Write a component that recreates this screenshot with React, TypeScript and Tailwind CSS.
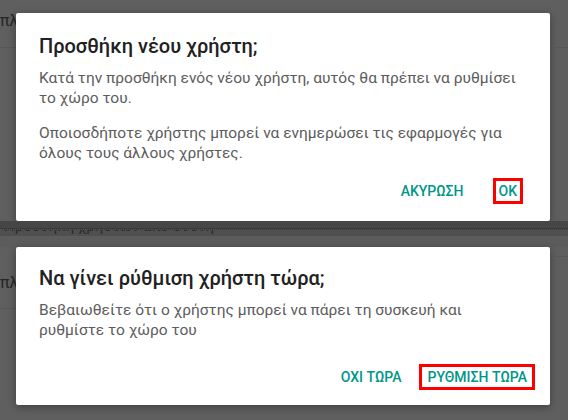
import React from "react";

const Dialog1: React.FC = () => (
  <div className="w-[534px] shrink-0 mt-[13px] bg-white rounded-[2px] shadow-[0_2px_8px_rgba(0,0,0,0.35)] pt-[19px] pl-[23px]">
    <h2 className="text-[20px] leading-[28px] font-medium text-[#212121]">
      Προσθήκη νέου χρήστη;
    </h2>
    <div className="mt-[8px] text-[15.5px] leading-[20px] text-[#5c5c5c] whitespace-nowrap">
      <p>
        Κατά την προσθήκη ενός νέου χρήστη, αυτός θα πρέπει να ρυθμίσει
        <br />
        το χώρο του.
      </p>
      <p className="mt-[15px]">
        Οποιοσδήποτε χρήστης μπορεί να ενημερώσει τις εφαρμογές για
        <br />
        όλους τους άλλους χρήστες.
      </p>
    </div>
    <div className="mt-[10px] pb-[12px] pr-[27px] flex justify-end items-center gap-[21px]">
      <button className="h-9 px-2 text-[14px] font-medium text-[#009688]">
        ΑΚΥΡΩΣΗ
      </button>
      <button className="h-9 flex items-center text-[14px] font-medium text-[#009688]">
        <span className="border-[3px] border-[#ff0000] px-[3px] leading-[20px]">
          OK
        </span>
      </button>
    </div>
  </div>
);

const Dialog2: React.FC = () => (
  <div className="w-[534px] shrink-0 bg-white rounded-[2px] shadow-[0_2px_8px_rgba(0,0,0,0.35)] pt-[17px] pl-[23px]">
    <h2 className="text-[20px] leading-[28px] font-medium text-[#212121]">
      Να γίνει ρύθμιση χρήστη τώρα;
    </h2>
    <div className="mt-[8px] text-[15.5px] leading-[20px] text-[#5c5c5c] whitespace-nowrap">
      <p>
        Βεβαιωθείτε ότι ο χρήστης μπορεί να πάρει τη συσκευή και
        <br />
        ρυθμίστε το χώρο του
      </p>
    </div>
    <div className="mt-[19px] pb-[10px] pr-[15px] flex justify-end items-center gap-[10px]">
      <button className="h-9 px-2 text-[14px] font-medium text-[#009688]">
        ΟΧΙ ΤΩΡΑ
      </button>
      <button className="h-9 flex items-center text-[14px] font-medium text-[#009688]">
        <span className="border-[3px] border-[#ff0000] px-[5px] leading-[20px]">
          ΡΥΘΜΙΣΗ ΤΩΡΑ
        </span>
      </button>
    </div>
  </div>
);

export default function App() {
  return (
    <div className="w-[568px] h-[420px] overflow-hidden bg-[#5f5f5f] flex flex-col font-['Roboto',sans-serif]">
      {/* first row */}
      <div className="flex items-start">
        <div className="w-[16px] shrink-0 overflow-hidden">
          <div className="h-[48px] border-b border-[#575757] pt-[11px] text-[16px] leading-[20px] text-[#262626] whitespace-nowrap">
            πλ
          </div>
        </div>
        <Dialog1 />
        <div className="flex-1">
          <div className="h-[48px] border-b border-[#575757]" />
        </div>
      </div>

      {/* strip between dialogs */}
      <div className="h-[26px] flex flex-col">
        <div className="h-[7px] bg-[#464646]" />
        <div className="h-[2px] bg-[#3a3a3a] border-b border-dotted border-[#555]" />
        <div className="h-[6px] bg-[#4f4f4f] overflow-hidden">
          <div className="-mt-[14px] pl-[4px] text-[15px] leading-[20px] text-[#2a2a2a] whitespace-nowrap">
            Προσθήκη χρηστών από οθόνη
          </div>
        </div>
        <div className="flex-1 bg-[#5c5c5c]" />
      </div>

      {/* second row */}
      <div className="flex items-start">
        <div className="w-[16px] shrink-0 overflow-hidden">
          <div className="h-[62px] border-b border-[#575757] pt-[26px] text-[16px] leading-[20px] text-[#262626] whitespace-nowrap">
            πλ
          </div>
        </div>
        <Dialog2 />
        <div className="flex-1">
          <div className="h-[10px] border-b border-[#575757]" />
        </div>
      </div>
    </div>
  );
}
